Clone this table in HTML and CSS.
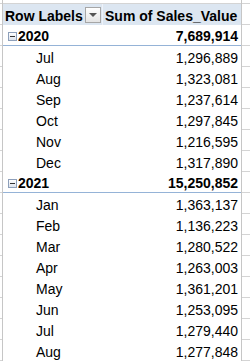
FILE: index.html
```html
<!DOCTYPE html>
<html>
<head>
<meta charset="utf-8">
<link rel="stylesheet" href="styles.css">
</head>
<body>
<div class="sheet">
  <div class="row top">
    <div class="stub"></div><div class="vline"></div><div class="c1"></div><div class="c2"></div><div class="vline"></div><div class="rest"></div>
  </div>
  <div class="row head">
    <div class="stub"></div><div class="vline"></div>
    <div class="c1"><span>Row Labels</span><span class="dd"></span></div>
    <div class="c2">Sum of Sales_Value</div>
    <div class="vline"></div><div class="rest"></div>
  </div>
  <div class="row year">
    <div class="stub"></div><div class="vline"></div>
    <div class="c1"><span class="tog"></span>2020</div>
    <div class="c2">7,689,914</div>
    <div class="vline"></div><div class="rest"></div>
  </div>
  <div class="row"><div class="stub"></div><div class="vline"></div><div class="c1">Jul</div><div class="c2">1,296,889</div><div class="vline"></div><div class="rest"></div></div>
  <div class="row"><div class="stub"></div><div class="vline"></div><div class="c1">Aug</div><div class="c2">1,323,081</div><div class="vline"></div><div class="rest"></div></div>
  <div class="row"><div class="stub"></div><div class="vline"></div><div class="c1">Sep</div><div class="c2">1,237,614</div><div class="vline"></div><div class="rest"></div></div>
  <div class="row"><div class="stub"></div><div class="vline"></div><div class="c1">Oct</div><div class="c2">1,297,845</div><div class="vline"></div><div class="rest"></div></div>
  <div class="row"><div class="stub"></div><div class="vline"></div><div class="c1">Nov</div><div class="c2">1,216,595</div><div class="vline"></div><div class="rest"></div></div>
  <div class="row"><div class="stub"></div><div class="vline"></div><div class="c1">Dec</div><div class="c2">1,317,890</div><div class="vline"></div><div class="rest"></div></div>
  <div class="row year">
    <div class="stub"></div><div class="vline"></div>
    <div class="c1"><span class="tog"></span>2021</div>
    <div class="c2">15,250,852</div>
    <div class="vline"></div><div class="rest"></div>
  </div>
  <div class="row"><div class="stub"></div><div class="vline"></div><div class="c1">Jan</div><div class="c2">1,363,137</div><div class="vline"></div><div class="rest"></div></div>
  <div class="row"><div class="stub"></div><div class="vline"></div><div class="c1">Feb</div><div class="c2">1,136,223</div><div class="vline"></div><div class="rest"></div></div>
  <div class="row"><div class="stub"></div><div class="vline"></div><div class="c1">Mar</div><div class="c2">1,280,522</div><div class="vline"></div><div class="rest"></div></div>
  <div class="row"><div class="stub"></div><div class="vline"></div><div class="c1">Apr</div><div class="c2">1,263,003</div><div class="vline"></div><div class="rest"></div></div>
  <div class="row"><div class="stub"></div><div class="vline"></div><div class="c1">May</div><div class="c2">1,361,201</div><div class="vline"></div><div class="rest"></div></div>
  <div class="row"><div class="stub"></div><div class="vline"></div><div class="c1">Jun</div><div class="c2">1,253,095</div><div class="vline"></div><div class="rest"></div></div>
  <div class="row"><div class="stub"></div><div class="vline"></div><div class="c1">Jul</div><div class="c2">1,279,440</div><div class="vline"></div><div class="rest"></div></div>
  <div class="row"><div class="stub"></div><div class="vline"></div><div class="c1">Aug</div><div class="c2">1,277,848</div><div class="vline"></div><div class="rest"></div></div>
</div>
</body>
</html>
```

FILE: styles.css
```css
html, body {
  margin: 0;
  padding: 0;
  background: #fff;
}
.sheet {
  width: 250px;
  font-family: "Liberation Sans", Arial, sans-serif;
  font-size: 14px;
  color: #000;
}
.row {
  display: flex;
  height: 21px;
}
.row > div {
  box-sizing: border-box;
}
.stub {
  width: 2px;
  border-bottom: 1px solid #d4d4d4;
}
.vline {
  width: 1px;
  background: #c6c6c6;
}
.rest {
  flex: 1;
  border-bottom: 1px solid #d4d4d4;
}
.c1 {
  width: 99px;
  display: flex;
  align-items: center;
  padding: 2px 0 0 33px;
  white-space: nowrap;
}
.c2 {
  width: 139px;
  display: flex;
  align-items: center;
  justify-content: flex-end;
  padding: 2px 3px 0 0;
  white-space: nowrap;
}
.top {
  height: 4px;
}
.top .c1, .top .c2 {
  padding: 0;
  border-bottom: 1px solid #d4d4d4;
}
.head .c1, .head .c2 {
  background: #dce6f1;
  font-weight: bold;
}
.head .c1 {
  padding-left: 2px;
  justify-content: space-between;
  padding-right: 1px;
  padding-top: 0;
}
.head .c1 span:first-child {
  padding-top: 2px;
}
.head .c2 {
  justify-content: flex-start;
  padding-left: 2px;
  border-left: 1px solid #eef2f8;
}
.dd {
  width: 16px;
  height: 16px;
  box-sizing: border-box;
  border: 1px solid #a6a6a6;
  background: linear-gradient(#ffffff, #e4e4e4);
  position: relative;
}
.dd::after {
  content: "";
  position: absolute;
  left: 3px;
  top: 5px;
  border-left: 4px solid transparent;
  border-right: 4px solid transparent;
  border-top: 4px solid #555;
}
.year .c1, .year .c2 {
  font-weight: bold;
  border-bottom: 1px solid #95b3d7;
}
.year .c1 {
  padding-left: 5px;
}
.tog {
  width: 9px;
  height: 9px;
  box-sizing: border-box;
  border: 1px solid #8d9fba;
  background: linear-gradient(#ffffff, #dde3ec);
  margin-right: 1px;
  position: relative;
  flex: none;
}
.tog::after {
  content: "";
  position: absolute;
  left: 1px;
  top: 3px;
  width: 5px;
  height: 1px;
  background: #333;
}
```
